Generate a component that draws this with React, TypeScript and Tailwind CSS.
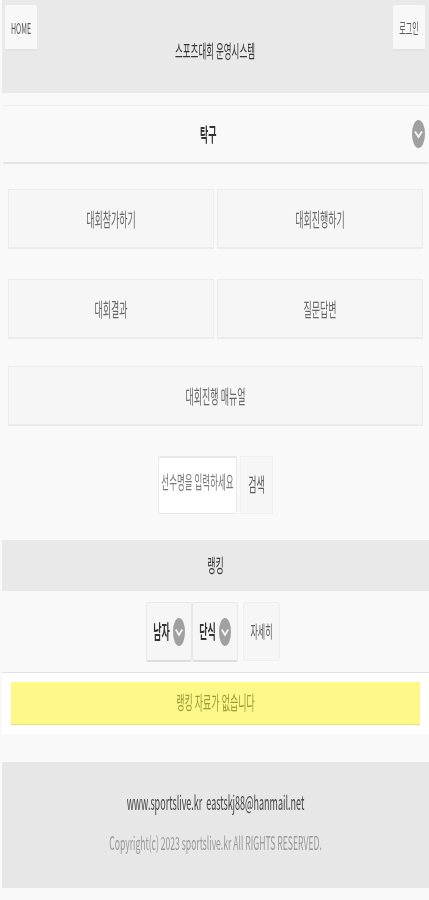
const font = "font-['Noto_Sans_CJK_KR','Noto_Sans',sans-serif]";

const Chevron = ({ className }: { className: string }) => (
  <svg className={className} viewBox="0 0 13 28" preserveAspectRatio="none">
    <ellipse cx="6.5" cy="14" rx="6.5" ry="14" fill="#a0a0a0" />
    <path d="M3 11.5 L6.5 17 L10 11.5" fill="none" stroke="#f4f4f4" strokeWidth="2" />
  </svg>
);

// text in the shot is squeezed sideways, so it is tall compared with its width
const Label = ({ children, className = "" }: any) => (
  <span className={`inline-block scale-y-[2.1] whitespace-nowrap ${className}`}>{children}</span>
);

const MenuButton = ({ children, className = "" }: any) => (
  <div className={`flex h-[60px] items-center justify-center border border-[#ececec] border-b-2 bg-[#f6f6f6] pt-[3px] text-[9px] text-[#666] ${className}`}>
    <Label>{children}</Label>
  </div>
);

const SmallSelect = ({ label }: { label: string }) => (
  <div className="flex h-[60px] w-[46px] items-center justify-center gap-[3px] rounded-[3px] border border-[#e8e8e8] border-b-2 border-b-[#dcdcdc] bg-[#f6f6f6] text-[9px] font-bold text-[#333]">
    <Label>{label}</Label>
    <Chevron className="h-[28px] w-[12px]" />
  </div>
);

export default function App() {
  return (
    <div className={`${font} h-[900px] w-full overflow-hidden bg-[#f9f9f9] blur-[0.7px]`}>
      <header className="ml-[2px] flex h-[93px] items-start justify-between bg-[#e9e9e9] px-[3px] pt-[5px] pr-[4px]">
        <div className="flex h-[46px] w-[32px] items-center justify-center rounded-[2px] border-b-2 border-[#e2e2e2] bg-[#f8f8f8] pb-[3px] text-[7px] leading-[30px] text-[#555]">
          <Label className="mt-[5px]">HOME</Label>
        </div>
        <div className="mt-[39px] text-[8.5px] text-[#333]">
          <Label>스포츠대회 운영시스템</Label>
        </div>
        <div className="flex h-[46px] w-[32px] items-center justify-center rounded-[2px] border-b-2 border-[#e2e2e2] bg-[#f8f8f8] pb-[3px] text-[7px] leading-[30px] text-[#555]">
          <Label className="mt-[5px]">로그인</Label>
        </div>
      </header>

      <div className="ml-[3px] mr-[1px] mt-[12px] flex h-[59px] items-center justify-between border-t border-b-2 border-[#f0f0f0] border-b-[#e4e4e4] bg-[#f9f9f9] pl-[197px] pr-[3px] text-[9px] font-bold text-[#333]">
        <Label className="mt-[2px]">탁구</Label>
        <Chevron className="h-[28px] w-[13px]" />
      </div>

      <div className="mx-[8px] mt-[25px] grid w-[415px] grid-cols-2 gap-x-[3px] gap-y-[30px]">
        <MenuButton>대회참가하기</MenuButton>
        <MenuButton>대회진행하기</MenuButton>
        <MenuButton>대회결과</MenuButton>
        <MenuButton>질문답변</MenuButton>
      </div>
      <MenuButton className="mx-[8px] mt-[27px] w-[415px] text-[8.5px]">대회진행 매뉴얼</MenuButton>

      <div className="mt-[30px] flex justify-center gap-[3px] pl-[2px]">
        <div className="flex h-[58px] w-[79px] items-start justify-center rounded-[2px] border border-t-2 border-[#e8e8e8] bg-white pt-[17px] text-[8.5px] text-[#777]">
          <Label>선수명을 입력하세요</Label>
        </div>
        <div className="flex h-[58px] w-[33px] items-center justify-center border border-[#f0f0f0] bg-[#f6f6f6] text-[9px] text-[#555]">
          <Label>검색</Label>
        </div>
      </div>

      <div className="ml-[2px] mt-[26px] flex h-[51px] items-center justify-center bg-[#e9e9e9] text-[9px] text-[#333]">
        <Label>랭킹</Label>
      </div>

      <div className="mt-[11px] flex justify-center pr-[3px]">
        <SmallSelect label="남자" />
        <SmallSelect label="단식" />
        <div className="ml-[5px] flex h-[59px] w-[37px] items-center justify-center rounded-[3px] border border-[#eeeeee] bg-[#f6f6f6] text-[8px] text-[#555]">
          <Label>자세히</Label>
        </div>
      </div>

      <div className="ml-[2px] mt-[10px] h-[62px] border-t border-[#e2e2e2] bg-white px-[9px] pt-[9px]">
        <div className="flex h-[43px] items-center justify-center border-b border-[#e8e070] bg-[#fdf887] text-[9px] text-[#9a9a3c]">
          <Label>랭킹 자료가 없습니다</Label>
        </div>
      </div>

      <footer className="ml-[2px] mt-[28px] flex h-[126px] flex-col items-center bg-[#e7e7e7] pt-[34px]">
        <div className="text-[9px] text-[#444]">
          <Label>www.sportslive.kr&nbsp;&nbsp;eastskj88@hanmail.net</Label>
        </div>
        <div className="mt-[26px] text-[8.6px] text-[#999]">
          <Label>Copyright(c) 2023 sportslive.kr All RIGHTS RESERVED.</Label>
        </div>
      </footer>
    </div>
  );
}
